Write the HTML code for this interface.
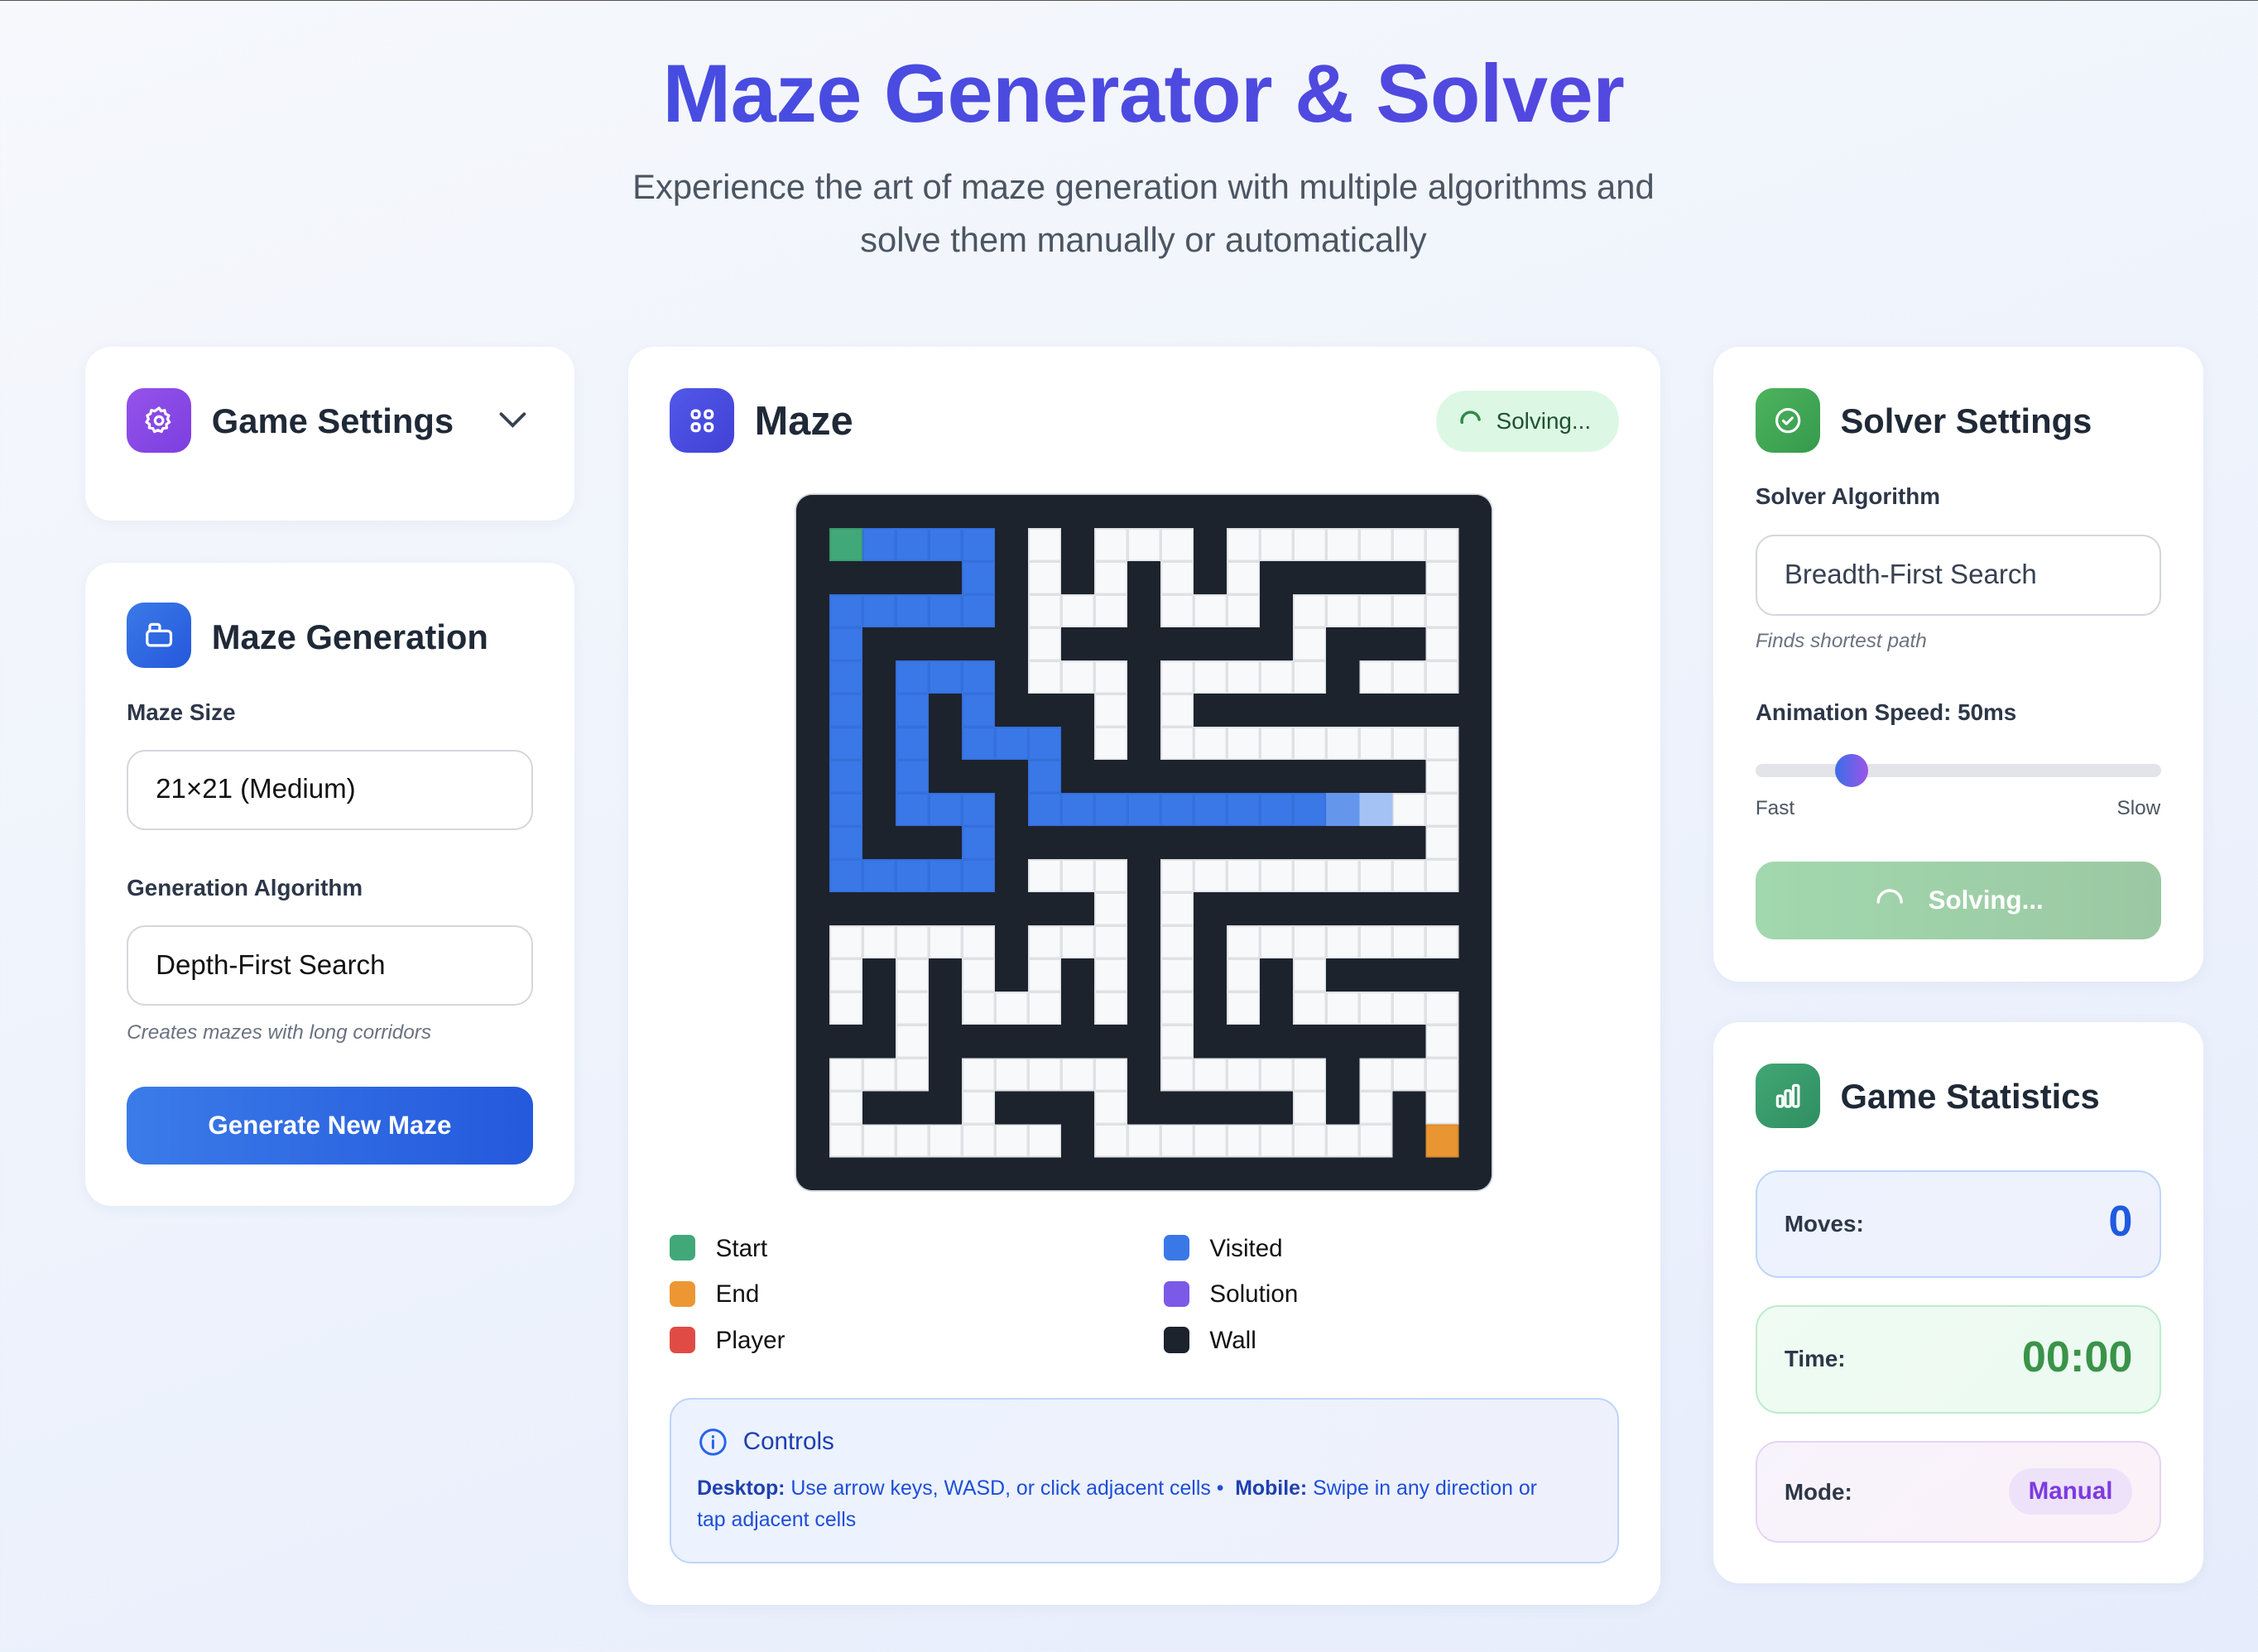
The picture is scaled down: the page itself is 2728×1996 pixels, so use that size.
<!DOCTYPE html>
<html><head><meta charset="utf-8">
<style>
*{box-sizing:border-box;margin:0;padding:0}
html,body{width:2728px;height:1996px;overflow:hidden}
body{background:linear-gradient(160deg,#f6f8fc 0%,#eef3fc 50%,#e6ecfb 100%);font-family:"Liberation Sans",Arial,sans-serif;color:#1f2937}
#w{position:absolute;left:0;top:0;width:1568px;height:1147px;zoom:1.7398;border-top:1px solid #555}
.abs{position:absolute}
.card{position:absolute;background:#fff;border-radius:18px;box-shadow:0 2px 10px rgba(30,50,120,0.05)}
.ico{position:absolute;width:45px;height:45px;border-radius:12px;display:flex;align-items:center;justify-content:center}
.h{position:absolute;font-size:24px;font-weight:bold;color:#1f2937;line-height:1}
.lbl{position:absolute;font-size:16px;font-weight:bold;color:#2d3748;line-height:1}
.inp{position:absolute;height:56px;border:1.5px solid #d4d7dd;border-radius:13px;background:#fff;font-size:19px;padding-left:19px;display:flex;align-items:center;color:#111}
.help{position:absolute;font-size:14px;font-style:italic;color:#6b7280;line-height:1}
#maze{position:absolute;left:553px;top:343px;width:483px;height:483px;border-radius:11px;overflow:hidden;box-shadow:0 0 0 1px #cfd3da;background:#1d232d}
#maze svg{display:block}
.sw{position:absolute;width:18px;height:18px;border-radius:4px}
.lg{position:absolute;font-size:17px;color:#111;line-height:1}
.stat{position:absolute;left:1219px;width:282px;border-radius:16px;border:1.5px solid}
.stat .k{position:absolute;left:19px;top:50%;transform:translateY(-50%);font-size:16px;font-weight:bold;color:#2d3748}
</style></head><body><div id="w">

<div class="abs" style="left:0;width:1588px;top:30px;text-align:center;font-size:57px;font-weight:bold;line-height:70px;letter-spacing:-0.3px;color:#4a4ce0;background:linear-gradient(90deg,#3f4fe0,#5b45e0);-webkit-background-clip:text;background-clip:text;-webkit-text-fill-color:transparent">Maze Generator &amp; Solver</div>
<div class="abs" style="left:0;width:1588px;top:111px;text-align:center;font-size:24px;line-height:37px;color:#4b5563">Experience the art of maze generation with multiple algorithms and<br>solve them manually or automatically</div>

<div class="card" style="left:59px;top:240px;width:340px;height:121px"></div>
<div class="ico" style="left:88px;top:269px;background:linear-gradient(135deg,#9553ea,#7c3ee0)">
<svg width="22" height="22" viewBox="0 0 24 24" fill="none" stroke="#fff" stroke-width="2" stroke-linejoin="round"><path d="M12 2.5l1.6 2.3 2.7-.6.6 2.7 2.5 1.3-1 2.6 1.5 2.4-2.3 1.6.2 2.8-2.8.3-1.2 2.5-2.6-1.1-2.6 1.1-1.2-2.5-2.8-.3.2-2.8-2.3-1.6 1.5-2.4-1-2.6 2.5-1.3.6-2.7 2.7.6z"/><circle cx="12" cy="12" r="3"/></svg></div>
<div class="h" style="left:147px;top:280px">Game Settings</div>
<svg class="abs" style="left:346px;top:284px" width="20" height="14" viewBox="0 0 20 14"><path d="M2 3l8 8 8-8" fill="none" stroke="#374151" stroke-width="2.2" stroke-linecap="round"/></svg>

<div class="card" style="left:59px;top:390px;width:340px;height:447px"></div>
<div class="ico" style="left:88px;top:418px;background:linear-gradient(135deg,#3b7ae8,#2458dc)">
<svg width="22" height="22" viewBox="0 0 24 24" fill="none" stroke="#fff" stroke-width="2" stroke-linejoin="round"><rect x="3" y="9" width="18" height="11" rx="2.5"/><path d="M5 9V5.5A1.5 1.5 0 0 1 6.5 4H11a1.5 1.5 0 0 1 1.5 1.5V9"/></svg></div>
<div class="h" style="left:147px;top:430px">Maze Generation</div>
<div class="lbl" style="left:88px;top:486px">Maze Size</div>
<div class="inp" style="left:88px;top:520px;width:282px">21×21 (Medium)</div>
<div class="lbl" style="left:88px;top:608px">Generation Algorithm</div>
<div class="inp" style="left:88px;top:642px;width:282px">Depth-First Search</div>
<div class="help" style="left:88px;top:710px">Creates mazes with long corridors</div>
<div class="abs" style="left:88px;top:754px;width:282px;height:54px;border-radius:13px;background:linear-gradient(90deg,#3b7be9,#2459dc);color:#fff;font-size:18px;font-weight:bold;display:flex;align-items:center;justify-content:center">Generate New Maze</div>

<div class="card" style="left:436px;top:240px;width:717px;height:874px"></div>
<div class="ico" style="left:465px;top:269px;background:linear-gradient(135deg,#5158e8,#4141d6)">
<svg width="20" height="20" viewBox="0 0 20 20" fill="none" stroke="#fff" stroke-width="2"><rect x="3" y="3" width="5" height="5" rx="2"/><rect x="12" y="3" width="5" height="5" rx="2"/><rect x="3" y="12" width="5" height="5" rx="2"/><rect x="12" y="12" width="5" height="5" rx="2"/></svg></div>
<div class="h" style="left:524px;top:278px;font-size:28px">Maze</div>
<div class="abs" style="left:997px;top:271px;width:127px;height:42px;border-radius:21px;background:#dcf8e4;font-size:16px;color:#1f5130;display:flex;align-items:center;padding-left:15px">
<svg width="18" height="18" viewBox="0 0 18 18" style="margin-right:9px"><path d="M3 10A6 6 0 0 1 15 8" fill="none" stroke="#2f8a4a" stroke-width="2" stroke-linecap="round"/></svg>Solving...</div>

<div id="maze"></div>

<div class="sw" style="left:465px;top:857px;background:#41a979"></div><div class="lg" style="left:497px;top:858px">Start</div>
<div class="sw" style="left:465px;top:889px;background:#ec9733"></div><div class="lg" style="left:497px;top:890px">End</div>
<div class="sw" style="left:465px;top:921px;background:#e04c45"></div><div class="lg" style="left:497px;top:922px">Player</div>
<div class="sw" style="left:808px;top:857px;background:#3a78e8"></div><div class="lg" style="left:840px;top:858px">Visited</div>
<div class="sw" style="left:808px;top:889px;background:#7b5ae8"></div><div class="lg" style="left:840px;top:890px">Solution</div>
<div class="sw" style="left:808px;top:921px;background:#1d232d"></div><div class="lg" style="left:840px;top:922px">Wall</div>

<div class="abs" style="left:465px;top:970px;width:659px;height:115px;border-radius:15px;background:linear-gradient(135deg,#ecf2fe,#eef1fc);border:1.5px solid #bdd5fa"></div>
<svg class="abs" style="left:485px;top:991px" width="20" height="20" viewBox="0 0 20 20" fill="none" stroke="#2563eb" stroke-width="1.7"><circle cx="10" cy="10" r="8.5"/><path d="M10 9v5M10 6v.5" stroke-linecap="round"/></svg>
<div class="abs" style="left:516px;top:992px;font-size:17px;color:#1e3fae;line-height:1">Controls</div>
<div class="abs" style="left:484px;top:1022px;width:605px;font-size:14.3px;line-height:22px;color:#1d4ed8"><b style="color:#1e40af">Desktop:</b> Use arrow keys, WASD, or click adjacent cells •&nbsp; <b style="color:#1e40af">Mobile:</b> Swipe in any direction or tap adjacent cells</div>

<div class="card" style="left:1190px;top:240px;width:340px;height:441px"></div>
<div class="ico" style="left:1219px;top:269px;background:linear-gradient(135deg,#4cb35e,#369a4c)">
<svg width="22" height="22" viewBox="0 0 24 24" fill="none" stroke="#fff" stroke-width="2"><circle cx="12" cy="12" r="8.5"/><path d="M8.5 12.2l2.3 2.3 4.5-4.5" stroke-linecap="round" stroke-linejoin="round"/></svg></div>
<div class="h" style="left:1278px;top:280px">Solver Settings</div>
<div class="lbl" style="left:1219px;top:336px">Solver Algorithm</div>
<div class="inp" style="left:1219px;top:371px;width:282px;color:#374151">Breadth-First Search</div>
<div class="help" style="left:1219px;top:438px">Finds shortest path</div>
<div class="lbl" style="left:1219px;top:486px">Animation Speed: 50ms</div>
<div class="abs" style="left:1219px;top:530px;width:282px;height:9px;border-radius:5px;background:#e3e4ea"></div>
<div class="abs" style="left:1274px;top:523px;width:23px;height:23px;border-radius:50%;background:linear-gradient(90deg,#3b6ee8,#9b55e8)"></div>
<div class="abs" style="left:1219px;top:553px;font-size:14px;color:#4b5563">Fast</div>
<div class="abs" style="left:1470px;top:553px;font-size:14px;color:#4b5563">Slow</div>
<div class="abs" style="left:1219px;top:598px;width:282px;height:54px;border-radius:13px;background:linear-gradient(90deg,#a2d8ae,#9bc8a2);color:#fff;font-size:18px;font-weight:bold;display:flex;align-items:center;justify-content:center">
<svg width="22" height="22" viewBox="0 0 22 22" style="margin-right:16px"><path d="M3 12A8 8 0 0 1 19 12" fill="none" stroke="#fff" stroke-width="2" stroke-linecap="round"/></svg>Solving...</div>

<div class="card" style="left:1190px;top:709px;width:340px;height:390px"></div>
<div class="ico" style="left:1219px;top:738px;background:linear-gradient(135deg,#41a774,#2f8e60)">
<svg width="22" height="22" viewBox="0 0 24 24" fill="none" stroke="#fff" stroke-width="2" stroke-linejoin="round"><rect x="4" y="12" width="4" height="8" rx="1"/><rect x="10" y="8" width="4" height="12" rx="1"/><rect x="16" y="4" width="4" height="16" rx="1"/></svg></div>
<div class="h" style="left:1278px;top:749px">Game Statistics</div>

<div class="stat" style="top:812px;height:75px;background:linear-gradient(135deg,#edf3fe,#eef1fc);border-color:#bcd6fb"><div class="k">Moves:</div><div class="abs" style="right:19px;top:20px;font-size:30px;font-weight:bold;color:#1f5ae0;line-height:1">0</div></div>
<div class="stat" style="top:906px;height:75px;background:linear-gradient(135deg,#effbf3,#ecfaf1);border-color:#bdeccb"><div class="k">Time:</div><div class="abs" style="right:19px;top:20px;font-size:30px;font-weight:bold;color:#3a9349;line-height:1">00:00</div></div>
<div class="stat" style="top:1000px;height:71px;background:linear-gradient(135deg,#f7f3fc,#fbf2f7);border-color:#e6d3f6"><div class="k">Mode:</div><div class="abs" style="right:19px;top:18px;width:86px;height:32px;border-radius:16px;background:#ede2fa;color:#7c3ae0;font-size:17px;font-weight:bold;display:flex;align-items:center;justify-content:center">Manual</div></div>

</div>
<script>
var rows=["WWWWWWWWWWWWWWWWWWWWW","WGBBBBWPWPPPWPPPPPPPW","WWWWWBWPWPWPWPWWWWWPW","WBBBBBWPPPWPPPWPPPPPW","WBWWWWWPWWWWWWWPWWWPW","WBWBBBWPPPWPPPPPWPPPW","WBWBWBWWWPWPWWWWWWWWW","WBWBWBBBWPWPPPPPPPPPW","WBWBWWWBWWWWWWWWWWWPW","WBWBBBWBBBBBBBBBLMPPW","WBWWWBWWWWWWWWWWWWWPW","WBBBBBWPPPWPPPPPPPPPW","WWWWWWWWWPWPWWWWWWWWW","WPPPPPWPPPWPWPPPPPPPW","WPWPWPWPWPWPWPWPWWWWW","WPWPWPPPWPWPWPWPPPPPW","WWWPWWWWWWWPWWWWWWWPW","WPPPWPPPPPWPPPPPWPPPW","WPWWWPWWWPWWWWWPWPWPW","WPPPPPPPWPPPPPPPPPWEW","WWWWWWWWWWWWWWWWWWWWW"];
var C={W:['#1d232d',''],P:['#f8f9fb','#dfe1e5'],B:['#3a78e8','#3470dc'],G:['#41a979','#3a9a6d'],E:['#e99632','#d88a2c'],L:['#6496ec',''],M:['#a5c2f4','']};
var s='<svg width="483" height="483" viewBox="0 0 483 483" xmlns="http://www.w3.org/2000/svg" shape-rendering="crispEdges">';
rows.forEach(function(r,y){for(var x=0;x<21;x++){var c=C[r[x]];s+='<rect x="'+(x*23)+'" y="'+(y*23)+'" width="23" height="23" fill="'+c[0]+'"/>';if(c[1])s+='<rect x="'+(x*23+0.5)+'" y="'+(y*23+0.5)+'" width="22" height="22" fill="none" stroke="'+c[1]+'" stroke-width="1"/>';}});
s+='</svg>';
document.getElementById('maze').innerHTML=s;
</script>
</body></html>
